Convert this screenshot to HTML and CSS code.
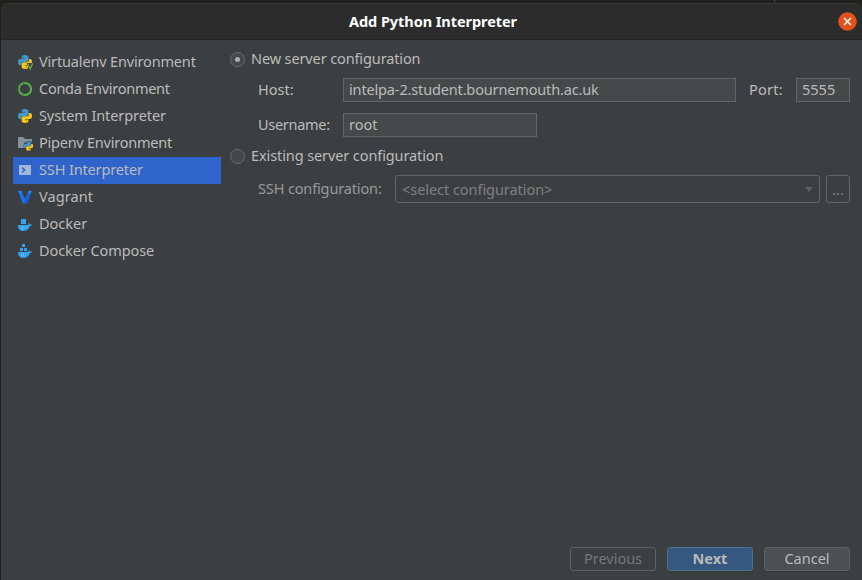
FILE: index.html
```html
<!DOCTYPE html>
<html lang="en">
<head>
<meta charset="utf-8">
<title>Add Python Interpreter</title>
<link rel="stylesheet" href="styles.css">
</head>
<body>
<svg class="defs" width="0" height="0">
  <symbol id="python" viewBox="0 0 14 14">
    <path fill="#4099c8" d="M6.800 0C4.500 0 3.600.7 3.600 2v1.500H7V4H2C.6 4 0 5.100 0 6.900 0 8.800.7 10 2 10h1.400V8.600C3.400 7.500 4 6.900 5.200 6.900h3.200c1.200 0 2-.7 2-1.900V2C10.400.7 9.200 0 6.800 0z"/>
    <path fill="#f5c518" d="M7.200 14c2.300 0 3.200-.7 3.200-2v-1.500H7V10h5c1.400 0 2-1.100 2-2.900C14 5.200 13.300 4 12 4h-1.200v1.400c0 1.200-.7 1.900-2 1.900H5.600c-1.200 0-2 .7-2 1.800V12c0 1.300 1.200 2 3.600 2z"/>
    <circle cx="5.300" cy="1.900" r=".45" fill="#3c3f41"/><circle cx="8.700" cy="12" r=".45" fill="#3c3f41"/>
  </symbol>
  <symbol id="whale" viewBox="0 0 14 8">
    <path fill="#35a2f0" d="M0 2h10.200c.5-.5.500-1.200.200-1.700L11 0c.6.400.9.900 1 1.500.7-.2 1.500-.1 2 .3-.4.900-1.100 1.300-2.200 1.300C10.800 6.300 8.700 8 5.500 8 2 8 0 6 0 2z"/>
    <circle cx="4.500" cy="4.800" r="1.100" fill="none" stroke="#8bc8ee" stroke-width=".6"/>
  </symbol>
</svg>
<main class="window">
  <header class="titlebar">
    <h1>Add Python Interpreter</h1>
    <button class="close" aria-label="Close"><svg width="19" height="19" viewBox="0 0 19 19"><circle cx="9.500" cy="9.500" r="9.300" fill="#e2501c"/><path d="M6 6l7 7M13 6l-7 7" stroke="#fff" stroke-width="1.500"/></svg></button>
  </header>
  <div class="content">
    <nav class="sidebar">
      <a class="item"><svg class="icon" viewBox="0 0 16 16"><use href="#python" x="1" y="1" width="14" height="14"/><path d="M9.800 9H16v7h-3.500z" fill="#3c3f41"/><path d="M10.800 9.500l2.400 5.500 2.400-5.500" fill="none" stroke="#62b543" stroke-width="1.200"/></svg><span class="t-virtual">Virtualenv Environment</span></a>
      <a class="item"><svg class="icon" viewBox="0 0 16 16"><circle cx="8" cy="8" r="6.100" fill="none" stroke="#51b544" stroke-width="2"/><path d="M3 4.500l1.500 1M2.500 11l1.500-1M6 2l.5 1M6 14l.5-1M1 8h1.500" stroke="#3c3f41" stroke-width=".7"/></svg><span class="t-conda">Conda Environment</span></a>
      <a class="item"><svg class="icon" viewBox="0 0 16 16"><use href="#python" x="1" y="1" width="14" height="14"/></svg><span class="t-system">System Interpreter</span></a>
      <a class="item"><svg class="icon" viewBox="0 0 16 16"><path fill="#87939a" d="M1 2h5l2 2h7v9H1z"/><circle cx="11.500" cy="11" r="5" fill="#3c3f41"/><use href="#python" x="6.800" y="6.300" width="9.500" height="9.500"/></svg><span class="t-pipenv">Pipenv Environment</span></a>
      <a class="item selected"><svg class="icon" viewBox="0 0 16 16"><path fill="#a3b7d8" d="M2 3h12v10H2z"/><path d="M5 5.500L7.700 8 5 10.500" fill="none" stroke="#2f65ca" stroke-width="1.500"/></svg><span class="t-ssh">SSH Interpreter</span></a>
      <a class="item"><svg class="icon" viewBox="0 0 16 16"><path fill="#1671f5" d="M1.300 2.500L4 1.500l4 8.500-.2 4.800L5.500 14z"/><path fill="#1563d5" d="M14.700 2.500L12 1.500 7.800 10v4.800l2.700-1z"/><path fill="#2b87ff" d="M1.300 2.500L4 1.500l1 2-2 1zM14.700 2.500L12 1.500l-1 2 2 1z"/></svg><span class="t-vagrant">Vagrant</span></a>
      <a class="item"><svg class="icon" viewBox="0 0 16 16"><path fill="#35a2f0" d="M4 3h5v5H4z"/><use href="#whale" x="1" y="7" width="14" height="8"/></svg><span>Docker</span></a>
      <a class="item"><svg class="icon" viewBox="0 0 16 16"><path fill="#35a2f0" d="M5 1h3v3H5zM3 5h3v3H3zM7 5h3v3H7z"/><use href="#whale" x="1" y="7" width="14" height="8"/></svg><span class="t-compose">Docker Compose</span></a>
    </nav>
    <form class="form">
      <div class="option"><span class="radio on"></span><span class="caption t-new">New server configuration</span></div>
      <div class="row host"><label class="short">Host:</label><div class="input wide"><span class="t-url">intelpa-2.student.bournemouth.ac.uk</span></div><label class="port">Port:</label><div class="input num">5555</div></div>
      <div class="row user"><label class="short"><span class="t-user">Username:</span></label><div class="input name">root</div></div>
      <div class="option existing"><span class="radio"></span><span class="caption t-exist">Existing server configuration</span></div>
      <div class="row ssh"><label class="long"><span class="t-conf">SSH configuration:</span></label><div class="select"><span class="t-select">&lt;select configuration&gt;</span><i class="arrow"></i></div><div class="more">...</div></div>
    </form>
  </div>
  <footer class="actions">
    <div class="button disabled">Previous</div>
    <div class="button primary">Next</div>
    <div class="button">Cancel</div>
  </footer>
</main>
</body>
</html>
```
FILE: styles.css
```css
* { box-sizing: border-box; }
body { margin: 0; height: 580px; overflow: hidden; padding: 3px 0 0 1px; background: linear-gradient(#484945, #484945) 774px 0 / 1px 2px no-repeat #20211c; color: #bbb; font: 14.5px/20px "Noto Sans", sans-serif; }
.defs { display: block; width: 0; height: 0; }
.window { height: 577px; display: flex; flex-direction: column; background: #3c3f41; border-radius: 7px 7px 0 0; overflow: hidden; }
.titlebar { height: 37px; flex: none; display: grid; grid-template-columns: 1fr auto 1fr; align-items: center; padding-bottom: 1px; background: #2c2c2c; border-top: 1px solid #393939; border-bottom: 1px solid #242424; }
h1 { grid-column: 2; margin: 0 0 1px 3px; font-size: 14.5px; line-height: 20px; letter-spacing: -.06px; color: #fff; }
.close { justify-self: end; margin: 0 5px 0 0; padding: 0; width: 19px; height: 19px; border: 0; background: none; }
.close svg { display: block; }
.content { flex: 1; display: flex; padding: 9px 12px 0; }
.sidebar { width: 208px; flex: none; }
.item { height: 27px; padding: 0 0 3px 4px; display: flex; align-items: center; gap: 6px; }
.selected { background: #2f65ca; }
.icon { width: 16px; height: 16px; margin-top: 2px; flex: none; overflow: visible; }
span { white-space: nowrap; }
.form { margin-left: 9px; width: 620px; }
.option { height: 20px; display: flex; align-items: center; gap: 6px; }
.caption { padding-bottom: 2px; }
.radio { width: 15px; height: 15px; border: 1px solid #6b6b6b; border-radius: 50%; background: #43494a; display: grid; place-items: center; }
.on::after { content: ""; width: 5px; height: 5px; border-radius: 50%; background: #adadad; }
.row { display: flex; align-items: center; padding-left: 28px; }
.row label { padding-bottom: 2px; }
.host { margin-top: 9px; }
.user { margin-top: 11px; }
.existing { margin-top: 9px; }
.ssh { margin-top: 9px; color: #999; }
.short { width: 85px; }
.long { width: 137px; }
.port { margin-left: 13px; width: 47px; letter-spacing: .25px; }
.input { height: 24px; border: 1px solid #646464; background: #45494a; padding: 0 5px; }
.wide { width: 393px; }
.num { width: 54px; }
.name { width: 194px; }
.select { width: 425px; height: 28px; display: flex; align-items: center; justify-content: space-between; border: 1px solid #646464; border-radius: 3px; padding: 0 6px; color: #808080; }
.arrow { border: solid transparent; border-width: 5px 4.5px 0; border-top-color: #5e6062; }
.more { width: 24px; height: 28px; margin-left: 6px; border: 1px solid #646464; border-radius: 3px; text-align: center; line-height: 27px; color: #808080; }
.actions { display: flex; justify-content: flex-end; gap: 11px; padding: 0 12px 9px; }
.button { width: 86px; height: 24px; padding-bottom: 2px; display: grid; place-items: center; border: 1px solid #5e6060; border-radius: 3px; background: #4c5052; box-shadow: 0 1px #36393a; }
.disabled { background: none; color: #777; box-shadow: none; }
.primary { background: #365880; border-color: #4c708c; font-weight: bold; }
.t-virtual { letter-spacing: -.16px; }
.t-conda { letter-spacing: -.26px; }
.t-system { letter-spacing: -.09px; }
.t-pipenv { letter-spacing: -.24px; }
.t-ssh { letter-spacing: -.14px; }
.t-vagrant { letter-spacing: .1px; }
.t-compose { letter-spacing: -.08px; }
.t-new { letter-spacing: -.12px; }
.t-url { letter-spacing: -.15px; }
.t-user { letter-spacing: -.3px; }
.t-exist { letter-spacing: -.1px; }
.t-conf { letter-spacing: -.14px; }
.t-select { letter-spacing: -.05px; }
```
